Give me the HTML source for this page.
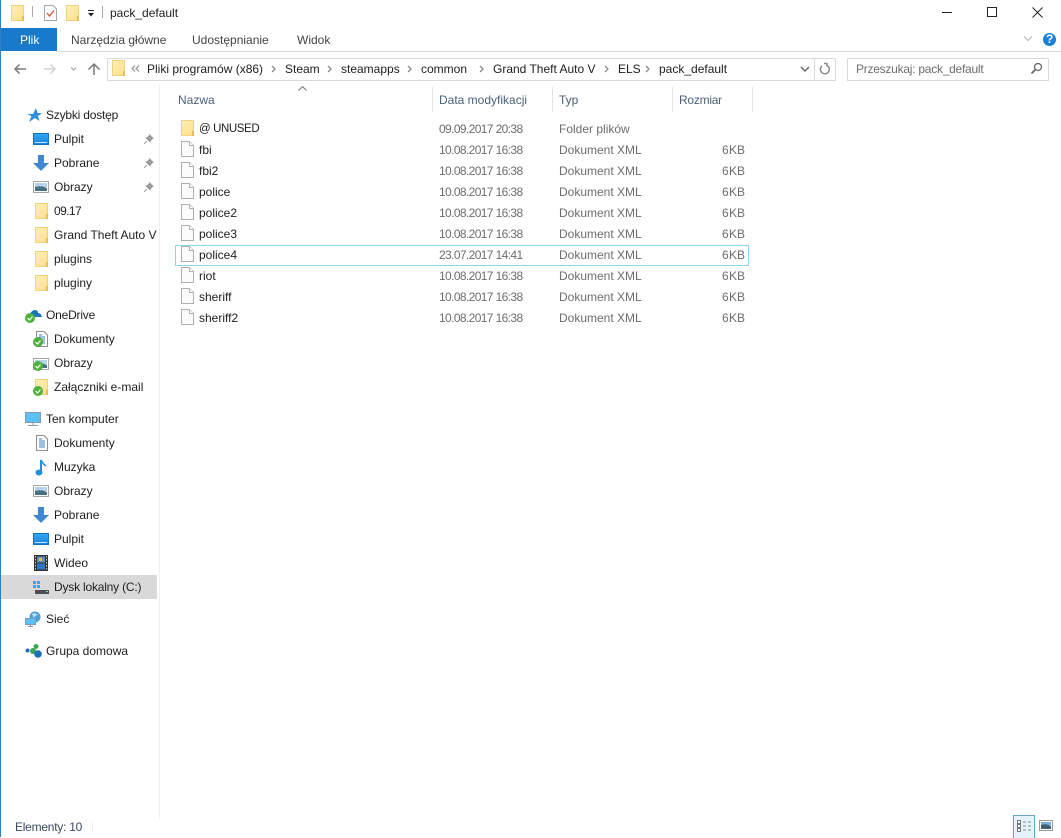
<!DOCTYPE html>
<html lang="pl">
<head>
<meta charset="utf-8">
<title>pack_default</title>
<style>
html,body{margin:0;padding:0;background:#fff}
body{width:1061px;height:837px;position:relative;overflow:hidden;font:12px/16px "Liberation Sans",Arial,sans-serif;color:#1e1e1e}
.t{position:absolute;white-space:nowrap;height:16px;line-height:16px}
.b{position:absolute}
svg.i{position:absolute;overflow:visible}
.g{color:#6d6d6d}
.h{color:#4c607a}
.tab{color:#444}
.r{text-align:right}
.d{letter-spacing:-.62px}
.s{word-spacing:-3px}
</style>
</head>
<body>
<svg width="0" height="0" style="position:absolute">
<defs>
<linearGradient id="fy" x1="0" y1="0" x2="1" y2="1"><stop offset="0" stop-color="#fff0b8"/><stop offset="1" stop-color="#fce08a"/></linearGradient>
<linearGradient id="db" x1="0" y1="0" x2="0" y2="1"><stop offset="0" stop-color="#36a6f5"/><stop offset="1" stop-color="#1583e0"/></linearGradient>
<symbol id="folder" viewBox="0 0 13 16"><rect x=".5" y=".5" width="12" height="15" fill="url(#fy)" stroke="#f0d180"/><rect x="11" y="11" width="2" height="5" fill="#e8bd55"/></symbol>
<symbol id="file" viewBox="0 0 13 16"><path d="M.5.5H8.500L12.500 4.500V15.500H.5Z" fill="#fcfcfc" stroke="#b0b0b0"/><path d="M8.500.5V4.500H12.500" fill="#fff" stroke="#b0b0b0"/></symbol>
<symbol id="desk" viewBox="0 0 16 12"><rect x=".5" y=".5" width="15" height="11" fill="url(#db)" stroke="#1471bd"/><rect x="2" y="9" width="12" height="1" fill="#bfe3ff"/></symbol>
<symbol id="down" viewBox="0 0 16 16"><path d="M5 0H11V8H16L8 16L0 8H5Z" fill="#3f87d6"/></symbol>
<symbol id="pic" viewBox="0 0 16 12"><rect x=".5" y=".5" width="15" height="11" fill="#fff" stroke="#a5a5a5"/><rect x="2" y="2" width="12" height="4" fill="#b4d4ea"/><path d="M2 6Q8 4 14 7V10H2Z" fill="#4a7083"/></symbol>
<symbol id="pin" viewBox="0 0 10 10"><path d="M5.500 0L10 4.500L8.500 5L6.500 7.500L6.500 9L1 3.500H2.500L5 1.500Z" fill="#9c9c9c"/><path d="M3 7L0 10" stroke="#9c9c9c"/></symbol>
<symbol id="ok" viewBox="0 0 10 10"><circle cx="5" cy="5" r="5" fill="#4fb13a"/><path d="M2.500 5L4.500 7L7.500 3.500" fill="none" stroke="#fff" stroke-width="1.200"/></symbol>
<symbol id="doc" viewBox="0 0 12 16"><path d="M.5.5H8L11.500 4V15.500H.5Z" fill="#fff" stroke="#8e8e8e"/><path d="M3 6H9M3 8H9M3 10H9M3 12H9M3 4H6" stroke="#3b7fc4"/></symbol>
</defs>
</svg>

<!-- window left edge -->
<div class="b" style="left:0;top:0;width:1px;height:837px;background:#2b7fc3"></div>

<!-- title bar -->
<svg class="i" style="left:11px;top:5px" width="13" height="16"><use href="#folder"/></svg>
<div class="b" style="left:32px;top:6px;width:1px;height:11px;background:#a8a8a8"></div>
<svg class="i" style="left:44px;top:5px" width="13" height="16"><path d="M.5.5H9L12.500 4V15.500H.5Z" fill="#fff" stroke="#a5a5a5"/><path d="M3 8L5.500 11L10 5.500" fill="none" stroke="#d9502e" stroke-width="1.300"/></svg>
<svg class="i" style="left:66px;top:5px" width="13" height="16"><use href="#folder"/></svg>
<svg class="i" style="left:87px;top:10px" width="8" height="7"><path d="M1 .5H7" stroke="#222"/><path d="M1 3H7L4 6.500Z" fill="#222"/></svg>
<div class="b" style="left:102px;top:6px;width:1px;height:12px;background:#a8a8a8"></div>
<div class="t" style="left:110px;top:5px">pack_default</div>
<svg class="i" style="left:940px;top:5px" width="104" height="14" fill="none" stroke="#222">
<path d="M2 7.500H12"/>
<rect x="47.500" y="2.500" width="9" height="9"/>
<path d="M92.500 2.500L102.500 12.500M102.500 2.500L92.500 12.500"/>
</svg>

<!-- ribbon tabs -->
<div class="b" style="left:1px;top:28px;width:56px;height:23px;background:#1979ca"></div>
<div class="t" style="left:20px;top:32px;color:#fff">Plik</div>
<div class="t tab" style="left:71px;top:32px">Narzędzia główne</div>
<div class="t tab" style="left:192px;top:32px">Udostępnianie</div>
<div class="t tab" style="left:297px;top:32px">Widok</div>
<div class="b" style="left:57px;top:51px;width:1004px;height:1px;background:#dadbdc"></div>
<svg class="i" style="left:1023px;top:35px" width="10" height="8"><path d="M1 1.500L5 5.500L9 1.500" fill="none" stroke="#b5b5b5"/></svg>
<svg class="i" style="left:1043px;top:33px" width="13" height="13"><circle cx="6.500" cy="6.500" r="6.500" fill="#1a7fd6"/></svg>
<div class="t" style="left:1046px;top:31px;color:#fff;font-weight:bold">?</div>

<!-- navigation buttons -->
<svg class="i" style="left:13px;top:62px" width="90" height="14" fill="none">
<path d="M13 7H2M6.500 2.500L2 7L6.500 11.500" stroke="#7a7a7a" stroke-width="1.500"/>
<path d="M31 7H42M37.500 2.500L42 7L37.500 11.500" stroke="#d2d2d2" stroke-width="1.500"/>
<path d="M58 5.500L60.500 8L63 5.500" stroke="#a8a8a8" stroke-width="1.200"/>
<path d="M81 13V2M75.500 7.500L81 2L86.500 7.500" stroke="#7a7a7a" stroke-width="1.500"/>
</svg>

<!-- address bar -->
<div class="b" style="left:107px;top:58px;width:727px;height:21px;border:1px solid #d9d9d9"></div>
<div class="b" style="left:814px;top:59px;width:1px;height:21px;background:#d9d9d9"></div>
<svg class="i" style="left:112px;top:60px" width="13" height="16"><use href="#folder"/></svg>
<svg class="i" style="left:131px;top:65px" width="9" height="8" fill="none" stroke="#888"><path d="M4 .5L1 3.500L4 6.500M8 .5L5 3.500L8 6.500"/></svg>
<div class="t" style="left:147px;top:61px">Pliki programów (x86)</div>
<div class="t" style="left:285px;top:61px">Steam</div>
<div class="t" style="left:341px;top:61px">steamapps</div>
<div class="t" style="left:421px;top:61px">common</div>
<div class="t" style="left:493px;top:61px">Grand Theft Auto V</div>
<div class="t" style="left:618px;top:61px">ELS</div>
<div class="t" style="left:659px;top:61px">pack_default</div>
<svg class="i" style="left:0;top:65px" width="660" height="9" fill="none" stroke="#8a8a8a" stroke-width="1.300">
<path d="M272 1L275 4L272 7M328 1L331 4L328 7M408 1L411 4L408 7M480 1L483 4L480 7M605 1L608 4L605 7M646 1L649 4L646 7"/>
</svg>
<svg class="i" style="left:800px;top:66px" width="10" height="7"><path d="M1 1L5 5L9 1" fill="none" stroke="#666" stroke-width="1.500"/></svg>
<svg class="i" style="left:819px;top:62px" width="12" height="14" fill="none" stroke="#888" stroke-width="1.400"><path d="M5 1.500H8V4.500"/><path d="M7.800 3.200A4.500 4.500 0 1 1 3 3.800"/></svg>

<!-- search -->
<div class="b" style="left:847px;top:58px;width:200px;height:21px;border:1px solid #d9d9d9"></div>
<div class="t g" style="left:856px;top:61px;letter-spacing:-.25px">Przeszukaj: pack_default</div>
<svg class="i" style="left:1030px;top:62px" width="13" height="13" fill="none" stroke="#666"><circle cx="8" cy="5" r="3.500" stroke-width="1.300"/><path d="M5.500 7.500L1.500 11.500" stroke-width="1.800"/></svg>

<!-- nav pane -->
<div class="b" style="left:159px;top:85px;width:1px;height:735px;background:#f0f0f0"></div>
<div class="b" style="left:1px;top:575px;width:156px;height:24px;background:#d9d9d9"></div>

<svg class="i" style="left:27px;top:108px" width="15" height="14"><path d="M9 0L10.500 5H15L11 8L12.500 13L8 10L2 14L4.500 8L0 6H6Z" fill="#2f8fdc"/></svg>
<div class="t" style="left:46px;top:107px;letter-spacing:-.2px">Szybki dostęp</div>

<svg class="i" style="left:33px;top:133px" width="16" height="12"><use href="#desk"/></svg>
<div class="t" style="left:54px;top:131px">Pulpit</div>
<svg class="i" style="left:144px;top:134px" width="10" height="10"><use href="#pin"/></svg>

<svg class="i" style="left:33px;top:155px" width="16" height="16"><use href="#down"/></svg>
<div class="t" style="left:54px;top:155px">Pobrane</div>
<svg class="i" style="left:144px;top:182px" width="10" height="10"><use href="#pin"/></svg>
<svg class="i" style="left:144px;top:158px" width="10" height="10"><use href="#pin"/></svg>

<svg class="i" style="left:33px;top:181px" width="16" height="12"><use href="#pic"/></svg>
<div class="t" style="left:54px;top:179px">Obrazy</div>

<svg class="i" style="left:35px;top:203px" width="13" height="16"><use href="#folder"/></svg>
<div class="t" style="left:54px;top:203px;letter-spacing:-.6px">09.17</div>
<svg class="i" style="left:35px;top:227px" width="13" height="16"><use href="#folder"/></svg>
<div class="t" style="left:54px;top:227px">Grand Theft Auto V</div>
<svg class="i" style="left:35px;top:251px" width="13" height="16"><use href="#folder"/></svg>
<div class="t" style="left:54px;top:251px">plugins</div>
<svg class="i" style="left:35px;top:275px" width="13" height="16"><use href="#folder"/></svg>
<div class="t" style="left:54px;top:275px">pluginy</div>

<svg class="i" style="left:25px;top:309px" width="17" height="14"><path d="M1 9Q2 5 5 5Q7 1 10 1Q13 1 13 4Q16 4 17 8H1Z" fill="#1b75bc"/></svg>
<svg class="i" style="left:25px;top:313px" width="10" height="10"><use href="#ok"/></svg>
<div class="t" style="left:46px;top:307px;letter-spacing:-.2px">OneDrive</div>

<svg class="i" style="left:36px;top:331px" width="12" height="16"><use href="#doc"/></svg>
<svg class="i" style="left:33px;top:337px" width="10" height="10"><use href="#ok"/></svg>
<div class="t" style="left:54px;top:331px">Dokumenty</div>

<svg class="i" style="left:33px;top:358px" width="16" height="12"><use href="#pic"/></svg>
<svg class="i" style="left:33px;top:361px" width="10" height="10"><use href="#ok"/></svg>
<div class="t" style="left:54px;top:355px">Obrazy</div>

<svg class="i" style="left:35px;top:379px" width="13" height="16"><use href="#folder"/></svg>
<svg class="i" style="left:33px;top:386px" width="10" height="10"><use href="#ok"/></svg>
<div class="t" style="left:54px;top:379px">Załączniki e-mail</div>

<svg class="i" style="left:25px;top:412px" width="16" height="15"><rect x=".5" y=".5" width="15" height="10" fill="#5cc0f5" stroke="#7f9db5"/><path d="M8 11V13M3 13.500H13" stroke="#8a9aa8"/></svg>
<div class="t" style="left:46px;top:411px">Ten komputer</div>

<svg class="i" style="left:36px;top:435px" width="12" height="16"><use href="#doc"/></svg>
<div class="t" style="left:54px;top:435px">Dokumenty</div>

<svg class="i" style="left:35px;top:459px" width="12" height="17"><path d="M6 1V13" stroke="#1e8fe1" stroke-width="2"/><ellipse cx="4" cy="13.500" rx="3.500" ry="3" fill="#1e8fe1"/><path d="M6 1Q8 5 11 7" fill="none" stroke="#1e8fe1" stroke-width="1.500"/></svg>
<div class="t" style="left:54px;top:459px">Muzyka</div>

<svg class="i" style="left:33px;top:485px" width="16" height="12"><use href="#pic"/></svg>
<div class="t" style="left:54px;top:483px">Obrazy</div>

<svg class="i" style="left:33px;top:507px" width="16" height="16"><use href="#down"/></svg>
<div class="t" style="left:54px;top:507px">Pobrane</div>

<svg class="i" style="left:33px;top:533px" width="16" height="12"><use href="#desk"/></svg>
<div class="t" style="left:54px;top:531px">Pulpit</div>

<svg class="i" style="left:34px;top:555px" width="14" height="16"><rect width="14" height="16" fill="#333"/><rect x="3" y="1.500" width="8" height="6" fill="#5e8fb8"/><rect x="3" y="8.500" width="8" height="6" fill="#2f78c4"/><rect x="5" y="3" width="3" height="3" fill="#e0c050"/><path d="M1.500 1V15M12.500 1V15" stroke="#ccc" stroke-dasharray="1.500 1.500"/></svg>
<div class="t" style="left:54px;top:555px">Wideo</div>

<svg class="i" style="left:33px;top:581px" width="16" height="14"><rect x="0" y="0" width="3" height="3" fill="#35a7e8"/><rect x="4" y="0" width="3" height="3" fill="#35a7e8"/><rect x="0" y="4" width="3" height="3" fill="#35a7e8"/><rect x="4" y="4" width="3" height="3" fill="#35a7e8"/><rect x="2" y="9" width="14" height="4" fill="#4a4f55"/><rect x="13" y="10" width="2" height="1" fill="#7fe07f"/></svg>
<div class="t" style="left:54px;top:579px;letter-spacing:-.2px">Dysk lokalny (C:)</div>

<svg class="i" style="left:25px;top:611px" width="16" height="16"><circle cx="10" cy="6" r="5.500" fill="#4c9fdc"/><path d="M7 3Q10 1 13 4Q10 4 9 7Z" fill="#bfe3f7"/><rect x="0.500" y="7.500" width="10" height="6" fill="#5cc0f5" stroke="#7f9db5"/><path d="M5.500 14V15.500M3 15.500H8" stroke="#8a9aa8"/></svg>
<div class="t" style="left:46px;top:611px">Sieć</div>

<svg class="i" style="left:25px;top:644px" width="17" height="15"><circle cx="2.500" cy="6.500" r="2" fill="#1c6fb8"/><circle cx="11" cy="2.500" r="2.500" fill="#3aa655"/><circle cx="8" cy="7" r="3" fill="#3aa655"/><circle cx="13" cy="10" r="3.800" fill="#1c6fb8"/></svg>
<div class="t" style="left:46px;top:643px">Grupa domowa</div>

<!-- column headers -->
<svg class="i" style="left:298px;top:86px" width="9" height="5"><path d="M.5 4.500L4.500 .5L8.500 4.500" fill="none" stroke="#777"/></svg>
<div class="t h" style="left:178px;top:92px">Nazwa</div>
<div class="t h" style="left:439px;top:92px">Data modyfikacji</div>
<div class="t h" style="left:559px;top:92px">Typ</div>
<div class="t h" style="left:679px;top:92px;letter-spacing:-.25px">Rozmiar</div>
<div class="b" style="left:432px;top:87px;width:1px;height:25px;background:#e5e5e5"></div>
<div class="b" style="left:552px;top:87px;width:1px;height:25px;background:#e5e5e5"></div>
<div class="b" style="left:672px;top:87px;width:1px;height:25px;background:#e5e5e5"></div>
<div class="b" style="left:752px;top:87px;width:1px;height:25px;background:#e5e5e5"></div>

<!-- selected row -->
<div class="b" style="left:175px;top:245px;width:572px;height:19px;border:1px solid #8fd3ee"></div>

<!-- rows -->
<svg class="i" style="left:181px;top:120px" width="13" height="16"><use href="#folder"/></svg>
<div class="t" style="left:199px;top:121px;font-size:11.5px;letter-spacing:-.4px">@ UNUSED</div>
<div class="t g d" style="left:439px;top:121px">09.09.2017 20:38</div>
<div class="t g" style="left:559px;top:121px">Folder plików</div>

<svg class="i" style="left:181px;top:141px" width="13" height="16"><use href="#file"/></svg>
<div class="t" style="left:199px;top:142px">fbi</div>
<div class="t g d" style="left:439px;top:142px">10.08.2017 16:38</div>
<div class="t g" style="left:559px;top:142px">Dokument XML</div>
<div class="t g r s" style="left:685px;top:142px;width:60px">6 KB</div>

<svg class="i" style="left:181px;top:162px" width="13" height="16"><use href="#file"/></svg>
<div class="t" style="left:199px;top:163px">fbi2</div>
<div class="t g d" style="left:439px;top:163px">10.08.2017 16:38</div>
<div class="t g" style="left:559px;top:163px">Dokument XML</div>
<div class="t g r s" style="left:685px;top:163px;width:60px">6 KB</div>

<svg class="i" style="left:181px;top:183px" width="13" height="16"><use href="#file"/></svg>
<div class="t" style="left:199px;top:184px">police</div>
<div class="t g d" style="left:439px;top:184px">10.08.2017 16:38</div>
<div class="t g" style="left:559px;top:184px">Dokument XML</div>
<div class="t g r s" style="left:685px;top:184px;width:60px">6 KB</div>

<svg class="i" style="left:181px;top:204px" width="13" height="16"><use href="#file"/></svg>
<div class="t" style="left:199px;top:205px">police2</div>
<div class="t g d" style="left:439px;top:205px">10.08.2017 16:38</div>
<div class="t g" style="left:559px;top:205px">Dokument XML</div>
<div class="t g r s" style="left:685px;top:205px;width:60px">6 KB</div>

<svg class="i" style="left:181px;top:225px" width="13" height="16"><use href="#file"/></svg>
<div class="t" style="left:199px;top:226px">police3</div>
<div class="t g d" style="left:439px;top:226px">10.08.2017 16:38</div>
<div class="t g" style="left:559px;top:226px">Dokument XML</div>
<div class="t g r s" style="left:685px;top:226px;width:60px">6 KB</div>

<svg class="i" style="left:181px;top:246px" width="13" height="16"><use href="#file"/></svg>
<div class="t" style="left:199px;top:247px">police4</div>
<div class="t g d" style="left:439px;top:247px">23.07.2017 14:41</div>
<div class="t g" style="left:559px;top:247px">Dokument XML</div>
<div class="t g r s" style="left:685px;top:247px;width:60px">6 KB</div>

<svg class="i" style="left:181px;top:267px" width="13" height="16"><use href="#file"/></svg>
<div class="t" style="left:199px;top:268px">riot</div>
<div class="t g d" style="left:439px;top:268px">10.08.2017 16:38</div>
<div class="t g" style="left:559px;top:268px">Dokument XML</div>
<div class="t g r s" style="left:685px;top:268px;width:60px">6 KB</div>

<svg class="i" style="left:181px;top:288px" width="13" height="16"><use href="#file"/></svg>
<div class="t" style="left:199px;top:289px">sheriff</div>
<div class="t g d" style="left:439px;top:289px">10.08.2017 16:38</div>
<div class="t g" style="left:559px;top:289px">Dokument XML</div>
<div class="t g r s" style="left:685px;top:289px;width:60px">6 KB</div>

<svg class="i" style="left:181px;top:309px" width="13" height="16"><use href="#file"/></svg>
<div class="t" style="left:199px;top:310px">sheriff2</div>
<div class="t g d" style="left:439px;top:310px">10.08.2017 16:38</div>
<div class="t g" style="left:559px;top:310px">Dokument XML</div>
<div class="t g r s" style="left:685px;top:310px;width:60px">6 KB</div>

<!-- status bar -->
<div class="t" style="left:15px;top:819px;color:#3c4a5e;letter-spacing:-.25px">Elementy: 10</div>
<div class="b" style="left:92px;top:821px;width:1px;height:12px;background:#f0f0f0"></div>
<div class="b" style="left:1013px;top:815px;width:20px;height:22px;border:1px solid #66a7c9;border-bottom:0;background:#e5f3fb"></div>
<svg class="i" style="left:1017px;top:820px" width="15" height="13" fill="none" stroke="#777"><rect x=".5" y=".5" width="3" height="3" fill="#fff"/><rect x=".5" y="4.500" width="3" height="3" fill="#fff"/><rect x=".5" y="8.500" width="3" height="3" fill="#fff"/><path d="M6 2H9M11 2H14M6 6H9M11 6H14M6 10H9M11 10H14" stroke="#888"/></svg>
<svg class="i" style="left:1039px;top:820px" width="14" height="11"><rect x=".5" y=".5" width="13" height="10" fill="#fff" stroke="#9a9a9a"/><rect x="2" y="2" width="10" height="3" fill="#7ab0d8"/><path d="M2 5Q7 3 12 6V9H2Z" fill="#3c6072"/></svg>
</body>
</html>
